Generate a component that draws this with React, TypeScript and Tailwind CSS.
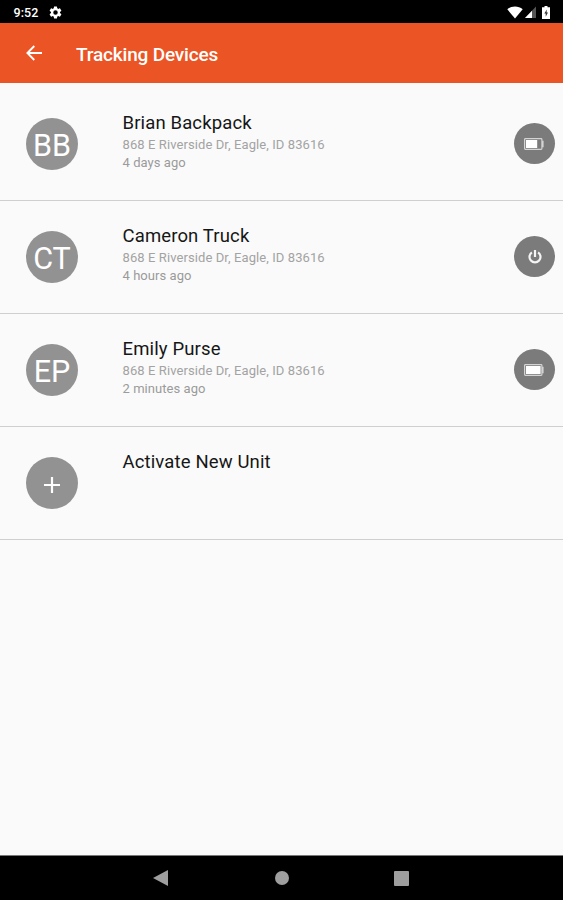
import React from "react";

type Status = "battery-mid" | "power" | "battery-full";

interface Device {
  initials: string;
  name: string;
  address: string;
  seen: string;
  status: Status;
}

const devices: Device[] = [
  { initials: "BB", name: "Brian Backpack", address: "868 E Riverside Dr, Eagle, ID 83616", seen: "4 days ago", status: "battery-mid" },
  { initials: "CT", name: "Cameron Truck", address: "868 E Riverside Dr, Eagle, ID 83616", seen: "4 hours ago", status: "power" },
  { initials: "EP", name: "Emily Purse", address: "868 E Riverside Dr, Eagle, ID 83616", seen: "2 minutes ago", status: "battery-full" },
];

function StatusIcon({ status }: { status: Status }) {
  if (status === "power") {
    return (
      <svg width="16" height="16" viewBox="0 0 16 16" fill="none" stroke="#f4f4f4" strokeWidth="2.2">
        <path d="M4.9 3.4A5.5 5.5 0 1 0 11.1 3.4M8 1v7" />
      </svg>
    );
  }
  return (
    <svg className="-ml-px" width="20" height="12" viewBox="0 0 20 12">
      <rect x="0.6" y="0.6" width="17.300" height="10.800" rx="0.8" fill="none" stroke="#d4d4d4" strokeWidth="1.2" />
      <path d="M18 2.8h1.6v6.4H18z" fill="#d4d4d4" />
      <rect x="2" y="2" width={status === "battery-full" ? 14.6 : 11.2} height="8" fill="#fff" />
    </svg>
  );
}

function StatusBar() {
  return (
    <div className="flex h-[23px] shrink-0 items-center bg-black pl-[13.500px] pr-[13px] pt-[1px] text-white">
      <span className="pt-[2px] text-[12.500px] font-medium leading-none tracking-[0.1px]">9:52</span>
      <svg className="ml-[9px]" width="15" height="15" viewBox="0 0 24 24" fill="#fff">
        <path d="M19.14 12.94c.04-.3.06-.61.06-.94s-.02-.64-.07-.94l2.03-1.58c.18-.14.23-.41.12-.61l-1.92-3.32c-.12-.22-.37-.29-.59-.22l-2.39.96c-.5-.38-1.03-.7-1.62-.94l-.36-2.54A.48.48 0 0 0 13.92 2.4h-3.84c-.24 0-.43.17-.47.41l-.36 2.54c-.59.24-1.13.57-1.62.94l-2.39-.96c-.22-.08-.47 0-.59.22L2.74 8.87c-.12.21-.08.47.12.61l2.03 1.58c-.05.3-.09.63-.09.94s.02.64.07.94l-2.03 1.58c-.18.14-.23.41-.12.61l1.92 3.32c.12.22.37.29.59.22l2.39-.96c.5.38 1.03.7 1.62.94l.36 2.54c.05.24.24.41.48.41h3.84c.24 0 .44-.17.47-.41l.36-2.54c.59-.24 1.13-.56 1.62-.94l2.39.96c.22.08.47 0 .59-.22l1.92-3.32c.12-.22.07-.47-.12-.61zM12 15.6A3.6 3.6 0 1 1 12 8.4a3.6 3.6 0 0 1 0 7.2z" />
      </svg>
      <svg className="ml-auto" width="16" height="13" viewBox="0 0 16 13" fill="#fff">
        <path d="M0.3 3.3C4.6-.4 11.4-.4 15.7 3.3L8 12.5z" />
      </svg>
      <svg className="ml-[2px]" width="11" height="12" viewBox="0 0 11 12">
        <path d="M0 12L11 0.500V12z" fill="#555" />
        <path d="M0 12L7 4.700V12z" fill="#fff" />
      </svg>
      <svg className="ml-[6px]" width="8" height="13" viewBox="0 0 8 13">
        <path d="M2.500 0h3v1.300H8V13H0V1.300h2.500z" fill="#fff" />
        <path d="M4.800 3.500L2.300 7.600h1.400v3.100L6 6.400H4.600z" fill="#333" />
      </svg>
    </div>
  );
}

function Avatar({ children }: { children: React.ReactNode }) {
  return (
    <div className="mt-[30px] flex size-[52px] shrink-0 items-center justify-center rounded-full bg-[#929292] text-white">
      {children}
    </div>
  );
}

export default function App() {
  return (
    <div className="flex h-[900px] w-[563px] flex-col overflow-hidden bg-[#fafafa] font-['Roboto','Liberation_Sans',sans-serif]">
      <StatusBar />
      <header className="flex h-[60px] shrink-0 items-center bg-[#eb5424] pl-[26px] text-white">
        <svg width="16" height="16" viewBox="0 0 16 16" fill="none" stroke="#fff" strokeWidth="1.900">
          <path d="M16 8H1.500M8.300 1L1.400 8L8.300 15" />
        </svg>
        <h1 className="ml-[34px] pt-[2px] text-[19px] font-medium leading-none tracking-[-0.17px]">Tracking Devices</h1>
      </header>
      <main className="flex-1 pt-[5px]">
        {devices.map((d) => (
          <section key={d.initials} className="flex h-[113px] border-b border-[#cfcfcf] pl-[26px] pr-[8px]">
            <Avatar>
              <span className="pt-[4px] text-[30.500px] leading-none">{d.initials}</span>
            </Avatar>
            <div className="ml-[44.500px] flex-1 whitespace-nowrap pt-[24px]">
              <h2 className="text-[18.500px] leading-[22px] tracking-[0.14px] text-[#161616]">{d.name}</h2>
              <p className="mt-[2px] text-[13px] leading-[18px] tracking-[0.09px] text-[#a3a3a3]">{d.address}</p>
              <p className="text-[13px] leading-[18px] tracking-[0.05px] text-[#9b9b9b]">{d.seen}</p>
            </div>
            <div className="mt-[35px] flex size-[41px] items-center justify-center rounded-full bg-[#7b7b7b]">
              <StatusIcon status={d.status} />
            </div>
          </section>
        ))}
        <section className="flex h-[113px] border-b border-[#cfcfcf] pl-[26px]">
          <Avatar>
            <svg className="mt-[3px]" width="16" height="16" viewBox="0 0 16 16" stroke="#fff" strokeWidth="2.200">
              <path d="M0 8h16M8 0v16" />
            </svg>
          </Avatar>
          <h2 className="ml-[44.500px] pt-[24px] text-[18.500px] leading-[22px] tracking-[0.14px] text-[#161616]">Activate New Unit</h2>
        </section>
      </main>
      <nav className="flex h-[45px] shrink-0 items-center border-t border-[#777] bg-black pl-[153px]">
        <svg width="15" height="16" viewBox="0 0 15 16" fill="#9e9e9e">
          <path d="M15 0v16L0 8z" />
        </svg>
        <div className="ml-[107px] size-[14px] rounded-full bg-[#9e9e9e]" />
        <div className="ml-[105px] size-[15px] rounded-[1px] bg-[#9e9e9e]" />
      </nav>
    </div>
  );
}
